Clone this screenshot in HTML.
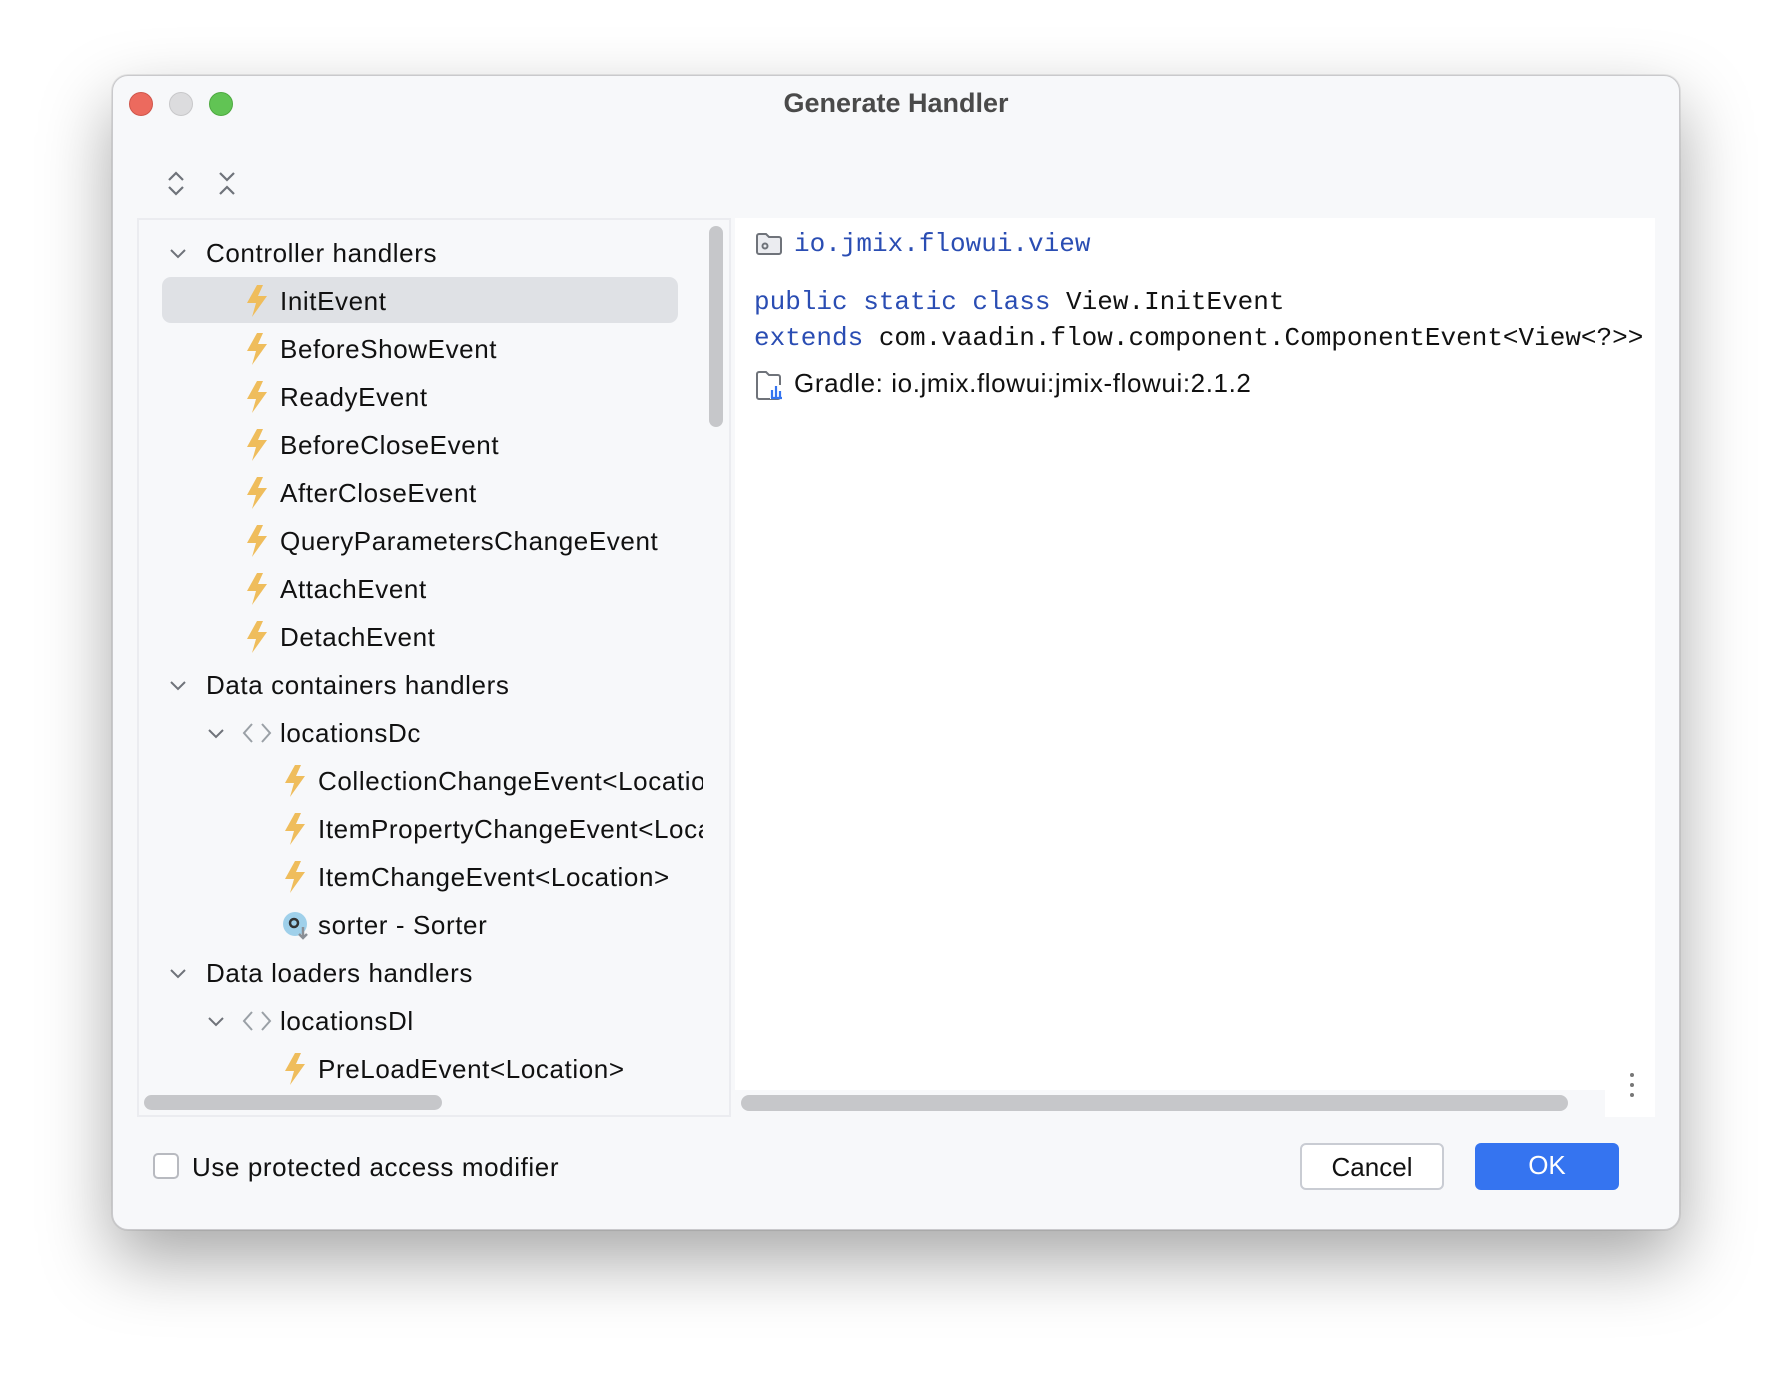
<!DOCTYPE html>
<html><head><meta charset="utf-8"><style>
*{margin:0;padding:0;box-sizing:border-box}
body{width:1792px;height:1378px;background:#fff;position:relative;overflow:hidden;font-family:"Liberation Sans",sans-serif;color:#111}
.win{position:absolute;left:112px;top:75px;width:1568px;height:1155px;background:#f7f8fa;border-radius:16px;border:1px solid #c9c9cc;box-shadow:0 30px 70px rgba(0,0,0,.35),0 0 0 1px rgba(0,0,0,.08)}
.dot{position:absolute;top:92px;width:24px;height:24px;border-radius:50%}
.title{position:absolute;left:0;width:1792px;top:88px;text-align:center;font-weight:bold;font-size:27px;color:#4a4a4a}
.lp{position:absolute;left:137px;top:218px;width:594px;height:899px;background:#f7f8fa;border:2px solid #ebecf0}
.rp{position:absolute;left:735px;top:218px;width:920px;height:899px;background:#fff}
.clip{position:absolute;left:137px;top:220px;width:566px;height:880px;overflow:hidden}
.row{position:absolute;height:48px;line-height:48px;font-size:26px;letter-spacing:0.6px;white-space:nowrap;color:#111}
.sel{position:absolute;left:162px;top:277px;width:516px;height:46px;background:#dfe1e5;border-radius:9px}
.chev{position:absolute;width:14px;height:14px}
.bar{position:absolute;background:#c6c7ca;border-radius:8px}
.mono{position:absolute;font-family:"Liberation Mono",monospace;font-size:26px;white-space:nowrap}
.kw{color:#2a4db3}
.btn{position:absolute;top:1143px;width:144px;height:47px;border-radius:6px;font-size:26px;text-align:center;line-height:45px}
</style></head><body>
<div class="win"></div>
<div class="dot" style="left:129px;background:#ec6a5e;border:1px solid #d0564b"></div>
<div class="dot" style="left:169px;background:#dcdcde;border:1px solid #c8c8ca"></div>
<div class="dot" style="left:209px;background:#61c454;border:1px solid #4eaa40"></div>
<div class="title">Generate Handler</div>
<svg style="position:absolute;left:164px;top:170px" width="80" height="28" viewBox="0 0 80 28" fill="none" stroke="#6f737a" stroke-width="2.2"><path d="M5 10l7-7 7 7M5 17l7 7 7-7"/><path d="M56 3l7 7 7-7M56 24l7-7 7 7"/></svg>
<div class="lp"></div>
<div class="rp"></div>
<div class="sel"></div>
<div class="clip" id="t"></div>
<div class="bar" style="left:709px;top:226px;width:14px;height:201px"></div>
<div class="bar" style="left:144px;top:1095px;width:298px;height:15px"></div>
<div style="position:absolute;left:735px;top:1090px;width:870px;height:27px;background:#f7f8fa"></div>
<div class="bar" style="left:741px;top:1095px;width:827px;height:16px"></div>
<div style="position:absolute;left:1630px;top:1073px;width:4px;height:4px;border-radius:50%;background:#777;box-shadow:0 10px 0 #777,0 20px 0 #777"></div>
<svg style="position:absolute;left:755px;top:232px" width="28" height="24" viewBox="0 0 28 24" fill="none" stroke="#6f737a" stroke-width="2"><path d="M2 4a2 2 0 012-2h7l3 3h10a2 2 0 012 2v13a2 2 0 01-2 2H4a2 2 0 01-2-2z" fill="#ebecf0"/><circle cx="10" cy="14" r="2.5"/></svg>
<div class="mono kw" style="left:794px;top:229px">io.jmix.flowui.view</div>
<div class="mono" style="left:754px;top:287px"><span class="kw">public static class</span> View.InitEvent</div>
<div class="mono" style="left:754px;top:323px"><span class="kw">extends</span> com.vaadin.flow.component.ComponentEvent&lt;View&lt;?&gt;&gt;</div>
<svg style="position:absolute;left:755px;top:370px" width="32" height="30" viewBox="0 0 32 30" fill="none"><path d="M2 4a2 2 0 012-2h7l3 3h9a2 2 0 012 2v20a2 2 0 01-2 2H4a2 2 0 01-2-2z" stroke="#6f737a" stroke-width="2"/><rect x="15" y="15" width="13" height="14" fill="#fff"/><path d="M17 28V20M21 28V16M25 28V21M16 28h11" stroke="#3574f0" stroke-width="2.2"/></svg>
<div class="row" style="left:794px;top:359px">Gradle: io.jmix.flowui:jmix-flowui:2.1.2</div>
<div style="position:absolute;left:153px;top:1153px;width:26px;height:26px;border:2px solid #b8bac0;border-radius:5px;background:#fff"></div>
<div class="row" style="left:192px;top:1143px">Use protected access modifier</div>
<div class="btn" style="left:1300px;background:#fff;border:2px solid #c9ccd3">Cancel</div>
<div class="btn" style="left:1475px;background:#3574f0;color:#fff">OK</div>
<script>
var bolt='<svg width="26" height="32" viewBox="0 0 26 32"><path d="M13 0L3 18h9L8 32 23 11h-9l5-11z" fill="#efbd5c"/></svg>';
var chev='<svg width="18" height="12" viewBox="0 0 18 12" fill="none" stroke="#6f737a" stroke-width="2"><path d="M2 2l7 7 7-7"/></svg>';
var br='<svg width="30" height="24" viewBox="0 0 30 24" fill="none" stroke="#9aa0a6" stroke-width="2"><path d="M10 3l-8 9 8 9M20 3l8 9-8 9"/></svg>';
var sorter='<svg width="28" height="30" viewBox="0 0 28 30"><circle cx="13" cy="13" r="12" fill="#9fd0ea"/><circle cx="12" cy="12" r="4" fill="none" stroke="#333" stroke-width="2.5"/><path d="M21 16v11M17 23l4 4 4-4" stroke="#8a8f96" stroke-width="2.5" fill="none"/></svg>';
var rows=[
[1,'c','Controller handlers'],[2,'b','InitEvent'],[2,'b','BeforeShowEvent'],[2,'b','ReadyEvent'],[2,'b','BeforeCloseEvent'],[2,'b','AfterCloseEvent'],[2,'b','QueryParametersChangeEvent'],[2,'b','AttachEvent'],[2,'b','DetachEvent'],
[1,'c','Data containers handlers'],[3,'d','locationsDc'],[4,'b','CollectionChangeEvent&lt;Location&gt;'],[4,'b','ItemPropertyChangeEvent&lt;Location&gt;'],[4,'b','ItemChangeEvent&lt;Location&gt;'],[4,'s','sorter - Sorter'],
[1,'c','Data loaders handlers'],[3,'d','locationsDl'],[4,'b','PreLoadEvent&lt;Location&gt;']];
var h='';
rows.forEach(function(r,i){
 var top=253+48*i-24-220, L=r[0], k=r[1];
 if(k=='c'){h+='<div class="chev" style="position:absolute;left:32px;top:'+(top+18)+'px">'+chev+'</div><div class="row" style="left:69px;top:'+top+'px">'+r[2]+'</div>';}
 else if(k=='d'){h+='<div style="position:absolute;left:70px;top:'+(top+18)+'px">'+chev+'</div><div style="position:absolute;left:105px;top:'+(top+12)+'px">'+br+'</div><div class="row" style="left:143px;top:'+top+'px">'+r[2]+'</div>';}
 else {var ix=L==2?107:145, tx=L==2?143:181;
  h+='<div style="position:absolute;left:'+ix+'px;top:'+(top+(k=='s'?10:8))+'px">'+(k=='s'?sorter:bolt)+'</div><div class="row" style="left:'+tx+'px;top:'+top+'px">'+r[2]+'</div>';}
});
document.getElementById('t').innerHTML=h;
</script>
</body></html>
